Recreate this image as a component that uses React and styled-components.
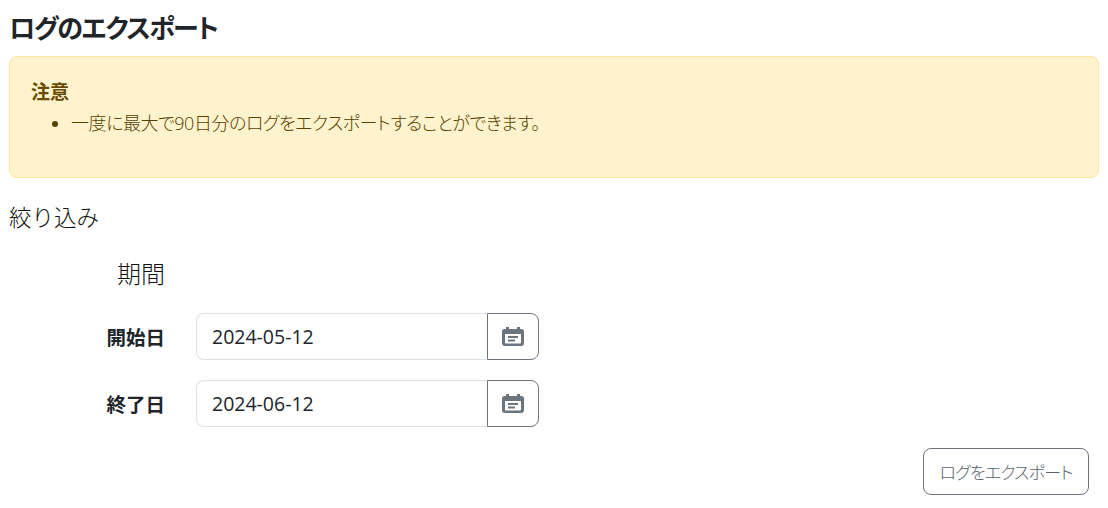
import React from "react";
import styled, { createGlobalStyle } from "styled-components";

const GlobalStyle = createGlobalStyle`
    html, body {
        margin: 0;
        background: #fff;
    }
    body {
        font-family: "Open Sans", "Noto Sans CJK JP", sans-serif;
        color: #212529;
    }
`;

const Page = styled.div`
    width: 1108px;
    height: 508px;
    box-sizing: border-box;
    padding: 10px 9px 0;
    overflow: hidden;
`;

const Title = styled.h1`
    margin: 0 0 10px;
    height: 36px;
    font-size: 26px;
    line-height: 36px;
    font-weight: 700;
    letter-spacing: -1.4px;
    font-feature-settings: "palt";
`;

const Alert = styled.div`
    box-sizing: border-box;
    width: 1090px;
    height: 122px;
    padding: 22px 21px;
    background: #fff3cd;
    border: 1px solid #ffe69c;
    border-radius: 8px;
    color: #664d03;
    font-size: 17px;
    line-height: 26px;
`;

const AlertTitle = styled.div`
    font-weight: 700;
    font-size: 19px;
`;

const AlertList = styled.ul`
    margin: 5px 0 0;
    padding-left: 40px;
    font-size: 18px;
    font-weight: 300;
    letter-spacing: -0.45px;
    color: #574102;
    font-feature-settings: "palt";
`;

const SectionTitle = styled.h2`
    margin: 24px 0 0;
    font-size: 22.5px;
    line-height: 32px;
    font-weight: 300;
    color: #111;
`;

const Fields = styled.div`
    display: grid;
    grid-template-columns: 156px 343px;
    column-gap: 31px;
    row-gap: 20px;
    margin-top: 23px;
    align-items: center;
`;

const GroupTitle = styled.div`
    grid-column: 1 / -1;
    width: 156px;
    margin-bottom: 2px;
    text-align: right;
    font-size: 24px;
    line-height: 34px;
    font-weight: 300;
    color: #111;
`;

const FieldLabel = styled.label`
    text-align: right;
    font-size: 19.5px;
    font-weight: 700;
`;

const InputGroup = styled.div`
    display: flex;
    height: 47px;
`;

const DateInput = styled.input`
    flex: 1;
    min-width: 0;
    box-sizing: border-box;
    padding: 0 15px;
    border: 1px solid #dee2e6;
    border-right: 0;
    border-radius: 8px 0 0 8px;
    background: #fff;
    color: #212529;
    font-family: "Open Sans", sans-serif;
    font-size: 19.5px;
    outline: none;
`;

const IconButton = styled.button`
    width: 52px;
    padding: 0;
    display: flex;
    align-items: center;
    justify-content: center;
    background: #fff;
    border: 1px solid #6c757d;
    border-radius: 0 8px 8px 0;
    color: #6c757d;
`;

const Footer = styled.div`
    display: flex;
    justify-content: flex-end;
    margin-top: 21px;
    padding-right: 10px;
`;

const ExportButton = styled.button`
    height: 47px;
    width: 166px;
    padding: 0;
    background: #fff;
    border: 1px solid #6c757d;
    border-radius: 8px;
    color: #59636c;
    font-family: inherit;
    font-size: 17px;
    font-weight: 300;
    letter-spacing: -0.8px;
    font-feature-settings: "palt";
`;

function CalendarIcon() {
    return (
        <svg width="22" height="19" viewBox="0 0 22 19" aria-hidden="true">
            <path
                fill="currentColor"
                fillRule="evenodd"
                d="M4 0h3v2h8V0h3v2h1.500A2.500 2.500 0 0 1 22 4.500V16a3 3 0 0 1-3 3H3a3 3 0 0 1-3-3V4.500A2.500 2.500 0 0 1 2.500 2H4V0ZM3 7v8.500A1 1 0 0 0 4 16.500h14a1 1 0 0 0 1-1V7H3Z"
            />
            <path fill="currentColor" d="M6 9h10v2H6zM6 12.500h7v2H6z" />
        </svg>
    );
}

function DateField({ label, value }) {
    return (
        <>
            <FieldLabel>{label}</FieldLabel>
            <InputGroup>
                <DateInput type="text" defaultValue={value} />
                <IconButton type="button">
                    <CalendarIcon />
                </IconButton>
            </InputGroup>
        </>
    );
}

export default function App() {
    return (
        <Page>
            <GlobalStyle />
            <Title>ログのエクスポート</Title>
            <Alert>
                <AlertTitle>注意</AlertTitle>
                <AlertList>
                    <li>一度に最大で90日分のログをエクスポートすることができます。</li>
                </AlertList>
            </Alert>
            <SectionTitle>絞り込み</SectionTitle>
            <Fields>
                <GroupTitle>期間</GroupTitle>
                <DateField label="開始日" value="2024-05-12" />
                <DateField label="終了日" value="2024-06-12" />
            </Fields>
            <Footer>
                <ExportButton type="button">ログをエクスポート</ExportButton>
            </Footer>
        </Page>
    );
}
